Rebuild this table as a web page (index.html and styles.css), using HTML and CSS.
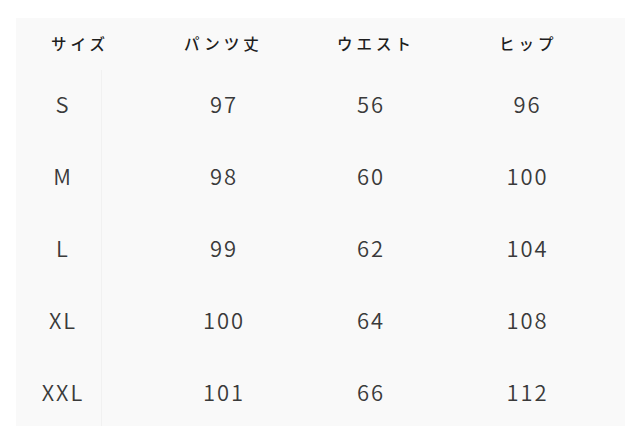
FILE: index.html
```html
<!DOCTYPE html>
<html lang="ja">
<head>
<meta charset="utf-8">
<link rel="stylesheet" href="styles.css">
</head>
<body>
<div class="panel">
  <div class="head">
    <div class="h">サイズ</div>
    <div class="h">パンツ丈</div>
    <div class="h">ウエスト</div>
    <div class="h">ヒップ</div>
  </div>
  <div class="body">
    <div class="c c1">S</div><div class="c c2">97</div><div class="c c3">56</div><div class="c c4">96</div>
    <div class="c c1">M</div><div class="c c2">98</div><div class="c c3">60</div><div class="c c4">100</div>
    <div class="c c1">L</div><div class="c c2">99</div><div class="c c3">62</div><div class="c c4">104</div>
    <div class="c c1">XL</div><div class="c c2">100</div><div class="c c3">64</div><div class="c c4">108</div>
    <div class="c c1">XXL</div><div class="c c2">101</div><div class="c c3">66</div><div class="c c4">112</div>
  </div>
</div>
</body>
</html>
```
FILE: styles.css
```css
html, body {
  margin: 0;
  padding: 0;
  background: #ffffff;
}
body {
  padding: 18px 15px 0 16px;
  font-family: "Noto Sans CJK JP", "Noto Sans", sans-serif;
}
.panel {
  width: 609px;
  height: 408px;
  background: #f9f9f9;
}
.head {
  display: grid;
  grid-template-columns: 133px 153px 162px 1fr;
  height: 52px;
  align-items: center;
  padding-left: 35px;
}
.h {
  font-size: 15.5px;
  font-weight: 500;
  letter-spacing: 4px;
  color: #1e1e1e;
  line-height: 1;
}
.body {
  display: grid;
  grid-template-columns: 94px 228px 66px 1fr;
  grid-auto-rows: 72px;
}
.c {
  display: flex;
  align-items: center;
  justify-content: center;
  font-size: 22px;
  font-weight: 350;
  color: #3a3a3a;
  letter-spacing: 2px;
  line-height: 1;
  padding-bottom: 6px;
}
.c1 {
  border-right: 1px solid #f1f1f1;
  padding-left: 9px;
  margin-right: 8px;
}
.c4 {
  padding-left: 26px;
}
```
